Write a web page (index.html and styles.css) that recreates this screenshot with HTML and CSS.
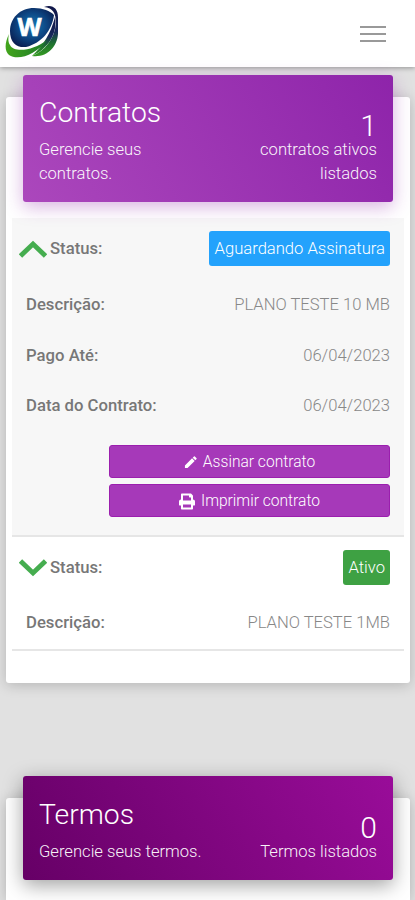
FILE: index.html
```html
<!DOCTYPE html>
<html lang="pt-BR">
<head>
    <meta charset="UTF-8">
    <meta name="viewport" content="width=device-width, initial-scale=1.0">
    <title>Contratos</title>
    <link rel="stylesheet" href="styles.css">
</head>
<body>
    <nav class="navbar">
        <svg class="logo" viewBox="0 0 54 54" role="img" aria-label="Logo">
            <defs>
                <radialGradient id="globe" cx="50%" cy="45%" r="60%">
                    <stop offset="0" stop-color="#1479b5"/>
                    <stop offset="0.55" stop-color="#0d4683"/>
                    <stop offset="1" stop-color="#0a1d50"/>
                </radialGradient>
                <linearGradient id="leaf" x1="0" y1="0" x2="1" y2="0">
                    <stop offset="0" stop-color="#43a51c"/>
                    <stop offset="1" stop-color="#1c7a28"/>
                </linearGradient>
                <linearGradient id="ring" x1="0" y1="0" x2="0" y2="1">
                    <stop offset="0" stop-color="#101648"/>
                    <stop offset="0.5" stop-color="#17295c"/>
                    <stop offset="0.75" stop-color="#1f7230"/>
                    <stop offset="1" stop-color="#349b20"/>
                </linearGradient>
            </defs>
            <path fill="url(#ring)" d="M39 2C47 -1 53 3 53 12V29C52 42 42 53 27 51C40 46 49 34 51 19C51 8 48 3 39 2Z"/>
            <path fill="url(#ring)" d="M50 12C53 28 43 44 27 51C38 41 46 28 50 12Z"/>
            <path fill="url(#leaf)" d="M4 29C0 37 -1 46 4 50C13 56 31 50 42 35C28 46 9 48 5 40C3 37 3 33 4 29Z"/>
            <path fill="url(#globe)" d="M5 26C5 13 15 3 29 3C38 3 45 6 49 10C47 25 37 38 21 42C12 43 5 38 5 26Z"/>
            <text class="logo-letter" x="24.500" y="31" text-anchor="middle">W</text>
        </svg>
        <button class="menu-toggle" aria-label="Menu">
            <span></span>
            <span></span>
            <span></span>
        </button>
    </nav>

    <main class="content">
        <section class="card">
            <div class="card-header card-header-primary">
                <div class="header-left">
                    <h4 class="card-title">Contratos</h4>
                    <p class="card-category">Gerencie seus contratos.</p>
                </div>
                <div class="header-right">
                    <span class="count">1</span>
                    <p class="card-category">contratos ativos listados</p>
                </div>
            </div>
            <div class="card-body">
                <div class="contract contract-open">
                    <div class="row row-status">
                        <span class="status-label">
                            <svg class="chevron" viewBox="0 0 28 18"><path d="M1.500 16L14 4L26.500 16"/></svg>
                            <b>Status:</b>
                        </span>
                        <span class="badge badge-info">Aguardando Assinatura</span>
                    </div>
                    <div class="row"><b>Descrição:</b><span>PLANO TESTE 10 MB</span></div>
                    <div class="row"><b>Pago Até:</b><span>06/04/2023</span></div>
                    <div class="row"><b>Data do Contrato:</b><span>06/04/2023</span></div>
                    <div class="actions">
                        <button class="btn">
                            <svg class="icon-pen" viewBox="0 0 14 14"><path d="M1 13V10.200L8.700 2.500L11.500 5.300L3.800 13ZM9.400 1.800L10.700 .5Q11.200 0 11.700 .5L13.500 2.300Q14 2.800 13.500 3.300L12.200 4.600Z"/></svg>
                            Assinar contrato
                        </button>
                        <button class="btn">
                            <svg class="icon-print" viewBox="0 0 512 512"><path d="M448 192V77.250c0-8.490-3.370-16.620-9.370-22.630L393.370 9.370c-6-6-14.140-9.370-22.630-9.370H96C78.330 0 64 14.330 64 32v160c-35.350 0-64 28.650-64 64v112c0 8.840 7.160 16 16 16h48v96c0 17.670 14.330 32 32 32h320c17.670 0 32-14.330 32-32v-96h48c8.840 0 16-7.160 16-16V256c0-35.350-28.650-64-64-64zm-64 256H128v-96h256v96zm0-224H128V64h192v48c0 8.840 7.160 16 16 16h48v96z"/></svg>
                            Imprimir contrato
                        </button>
                    </div>
                </div>
                <div class="contract">
                    <div class="row row-status">
                        <span class="status-label">
                            <svg class="chevron" viewBox="0 0 28 18"><path d="M1.500 2L14 14L26.500 2"/></svg>
                            <b>Status:</b>
                        </span>
                        <span class="badge badge-success">Ativo</span>
                    </div>
                    <div class="row"><b>Descrição:</b><span>PLANO TESTE 1MB</span></div>
                </div>
            </div>
        </section>

        <section class="card card-terms">
            <div class="card-header card-header-dark">
                <div class="header-left">
                    <h4 class="card-title">Termos</h4>
                    <p class="card-category">Gerencie seus termos.</p>
                </div>
                <div class="header-right">
                    <span class="count">0</span>
                    <p class="card-category">Termos listados</p>
                </div>
            </div>
        </section>
    </main>
</body>
</html>
```
FILE: styles.css
```css
* {
    box-sizing: border-box;
}

body {
    margin: 0;
    height: 900px;
    overflow: hidden;
    background-color: #e1e1e1;
    font-family: Roboto, sans-serif;
    font-size: 16.6px;
    font-weight: 300;
    line-height: 24px;
    color: #888;
}

.navbar {
    position: relative;
    display: flex;
    justify-content: space-between;
    align-items: center;
    height: 67px;
    padding: 0 29px 0 5px;
    background-color: #fff;
    box-shadow: 0 1px 5px rgba(0, 0, 0, 0.35);
}

.logo {
    width: 54px;
    height: 54px;
    margin-bottom: 4px;
}

.logo-letter {
    font: bold 25px "Open Sans", sans-serif;
    fill: #fff;
    stroke: #fff;
    stroke-width: 0.6;
}

.menu-toggle {
    display: flex;
    flex-direction: column;
    gap: 5px;
    padding: 0;
    border: 0;
    background: none;
}

.menu-toggle span {
    width: 26px;
    height: 2px;
    background-color: #999;
}

.content {
    padding: 30px 5px 0 6px;
}

.card {
    height: 586px;
    margin-bottom: 115px;
    padding: 0 6px;
    background-color: #fff;
    border-radius: 3px;
    box-shadow: 0 2px 14px rgba(0, 0, 0, 0.2);
}

.card-terms {
    height: 102px;
    margin-bottom: 0;
    border-radius: 3px 3px 0 0;
}

.card-header {
    position: relative;
    top: -22px;
    display: flex;
    justify-content: space-between;
    margin: 0 11px;
    padding: 20px 16px 0;
    border-radius: 3px;
    color: #fff;
}

.card-header-primary {
    height: 127px;
    background: linear-gradient(60deg, #ab47bc, #8e24aa);
    box-shadow: 0 5px 18px rgba(142, 36, 170, 0.35);
}

.card-header-dark {
    height: 104px;
    padding-top: 21px;
    background: linear-gradient(60deg, #660066, #990c99);
    box-shadow: 0 5px 20px rgba(0, 0, 0, 0.38);
}

.header-left {
    width: 170px;
}

.card-header-primary .header-left {
    width: 130px;
}

.header-right {
    width: 125px;
    padding-top: 18px;
    text-align: right;
}

.card-title {
    margin: 0 0 8px;
    font-size: 28.3px;
    font-weight: 300;
    line-height: 35px;
}

.count {
    display: block;
    font-size: 30px;
    line-height: 25px;
}

.card-category {
    margin: 0;
    line-height: 24px;
    opacity: 0.95;
}

.card-body {
    margin-top: -6px;
}

.contract {
    height: 114px;
    padding: 0 14px;
    border-bottom: 2px solid #e6e6e6;
}

.contract-open {
    height: 319px;
    background-color: #f7f7f7;
}

.row {
    display: flex;
    justify-content: space-between;
    align-items: center;
    height: 50.5px;
}

.row b {
    font-size: 16.7px;
    font-weight: 500;
    color: #777;
}

.contract-open .row b,
.contract-open .row span:last-child:not(.badge) {
    padding-top: 2px;
}

.contract-open .row-status b {
    padding-top: 1px;
}

.row-status {
    height: 61px;
}

.status-label {
    display: flex;
    align-items: center;
    gap: 3px;
    margin-left: -7px;
}

.chevron {
    width: 28px;
    height: 18px;
    fill: none;
    stroke: #45ad4f;
    stroke-width: 4.8;
}

.badge {
    height: 35px;
    padding: 0 5px 0 6px;
    border-radius: 3px;
    line-height: 35px;
    color: #fff;
}

.badge-info {
    background-color: #23a2fc;
}

.badge-success {
    background-color: #3ea143;
}

.actions {
    display: flex;
    flex-direction: column;
    gap: 6px;
    padding: 14px 0 0 83px;
}

.btn {
    display: flex;
    justify-content: center;
    align-items: center;
    gap: 6px;
    height: 33px;
    padding: 2px 0 0;
    border: 1px solid #9b1fae;
    border-radius: 3px;
    background-color: #a639b9;
    font: 300 15.6px Roboto, sans-serif;
    color: #fff;
}

.btn svg {
    fill: #fff;
}

.icon-pen {
    width: 13px;
    height: 13px;
}

.icon-print {
    width: 16px;
    height: 17px;
}
```
